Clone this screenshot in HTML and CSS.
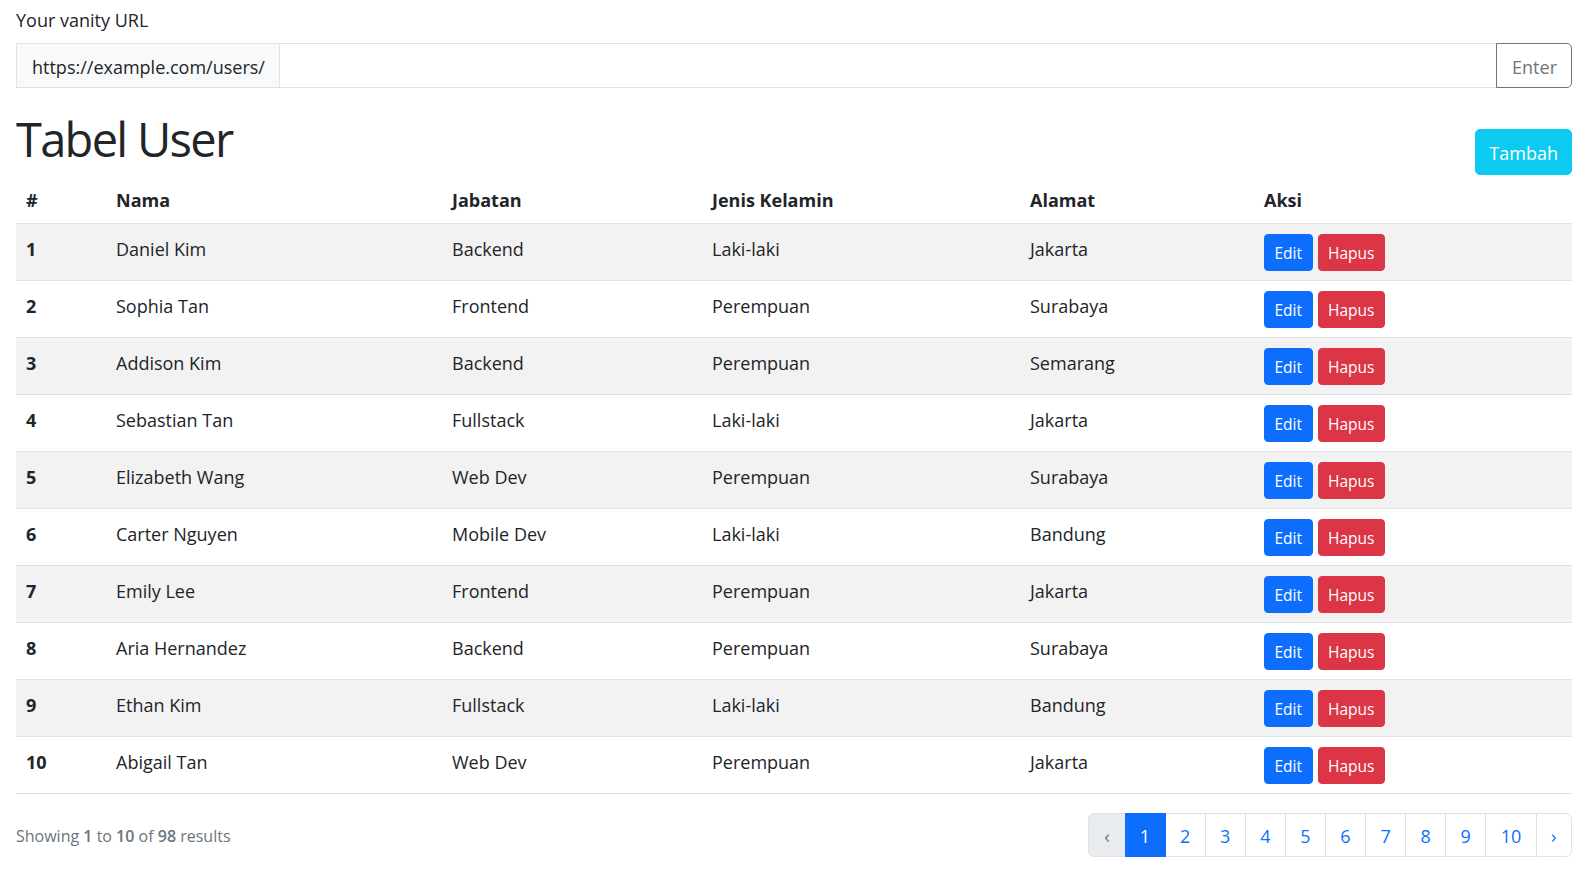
FILE: index.html
```html
<!DOCTYPE html>
<html lang="id">
<head>
<meta charset="utf-8">
<title>Tabel User</title>
<link rel="stylesheet" href="styles.css">
</head>
<body>
<div class="page">
  <label class="field-label" for="vanity">Your vanity URL</label>
  <div class="input-group">
    <span class="input-prefix">https://example.com/users/</span>
    <input id="vanity" class="input-main" type="text">
    <button class="btn-outline" type="button">Enter</button>
  </div>

  <div class="title-row">
    <h1 class="title">Tabel User</h1>
    <button class="btn-info" type="button">Tambah</button>
  </div>

  <table class="table">
    <colgroup>
      <col class="c-no"><col class="c-nama"><col class="c-jab"><col class="c-jk"><col class="c-alamat"><col class="c-aksi">
    </colgroup>
    <thead>
      <tr><th>#</th><th>Nama</th><th>Jabatan</th><th>Jenis Kelamin</th><th>Alamat</th><th>Aksi</th></tr>
    </thead>
    <tbody>
      <tr><th>1</th><td>Daniel Kim</td><td>Backend</td><td>Laki-laki</td><td>Jakarta</td><td><div class="actions"><button class="btn-sm btn-primary">Edit</button><button class="btn-sm btn-danger">Hapus</button></div></td></tr>
      <tr><th>2</th><td>Sophia Tan</td><td>Frontend</td><td>Perempuan</td><td>Surabaya</td><td><div class="actions"><button class="btn-sm btn-primary">Edit</button><button class="btn-sm btn-danger">Hapus</button></div></td></tr>
      <tr><th>3</th><td>Addison Kim</td><td>Backend</td><td>Perempuan</td><td>Semarang</td><td><div class="actions"><button class="btn-sm btn-primary">Edit</button><button class="btn-sm btn-danger">Hapus</button></div></td></tr>
      <tr><th>4</th><td>Sebastian Tan</td><td>Fullstack</td><td>Laki-laki</td><td>Jakarta</td><td><div class="actions"><button class="btn-sm btn-primary">Edit</button><button class="btn-sm btn-danger">Hapus</button></div></td></tr>
      <tr><th>5</th><td>Elizabeth Wang</td><td>Web Dev</td><td>Perempuan</td><td>Surabaya</td><td><div class="actions"><button class="btn-sm btn-primary">Edit</button><button class="btn-sm btn-danger">Hapus</button></div></td></tr>
      <tr><th>6</th><td>Carter Nguyen</td><td>Mobile Dev</td><td>Laki-laki</td><td>Bandung</td><td><div class="actions"><button class="btn-sm btn-primary">Edit</button><button class="btn-sm btn-danger">Hapus</button></div></td></tr>
      <tr><th>7</th><td>Emily Lee</td><td>Frontend</td><td>Perempuan</td><td>Jakarta</td><td><div class="actions"><button class="btn-sm btn-primary">Edit</button><button class="btn-sm btn-danger">Hapus</button></div></td></tr>
      <tr><th>8</th><td>Aria Hernandez</td><td>Backend</td><td>Perempuan</td><td>Surabaya</td><td><div class="actions"><button class="btn-sm btn-primary">Edit</button><button class="btn-sm btn-danger">Hapus</button></div></td></tr>
      <tr><th>9</th><td>Ethan Kim</td><td>Fullstack</td><td>Laki-laki</td><td>Bandung</td><td><div class="actions"><button class="btn-sm btn-primary">Edit</button><button class="btn-sm btn-danger">Hapus</button></div></td></tr>
      <tr><th>10</th><td>Abigail Tan</td><td>Web Dev</td><td>Perempuan</td><td>Jakarta</td><td><div class="actions"><button class="btn-sm btn-primary">Edit</button><button class="btn-sm btn-danger">Hapus</button></div></td></tr>
    </tbody>
  </table>

  <div class="footer">
    <p class="summary">Showing <span class="strong">1</span> to <span class="strong">10</span> of <span class="strong">98</span> results</p>
    <ul class="pagination">
      <li class="page-item disabled"><span class="page-link">&lsaquo;</span></li>
      <li class="page-item active"><span class="page-link">1</span></li>
      <li class="page-item"><a class="page-link" href="#">2</a></li>
      <li class="page-item"><a class="page-link" href="#">3</a></li>
      <li class="page-item"><a class="page-link" href="#">4</a></li>
      <li class="page-item"><a class="page-link" href="#">5</a></li>
      <li class="page-item"><a class="page-link" href="#">6</a></li>
      <li class="page-item"><a class="page-link" href="#">7</a></li>
      <li class="page-item"><a class="page-link" href="#">8</a></li>
      <li class="page-item"><a class="page-link" href="#">9</a></li>
      <li class="page-item"><a class="page-link" href="#">10</a></li>
      <li class="page-item"><a class="page-link" href="#">&rsaquo;</a></li>
    </ul>
  </div>
</div>
</body>
</html>
```
FILE: styles.css
```css
* { box-sizing: border-box; }

html, body {
  margin: 0;
  background: #fff;
}

body {
  font-family: "Open Sans", "Noto Sans", sans-serif;
  font-size: 18px;
  line-height: 27px;
  color: #212529;
}

.page {
  padding: 7px 15px 0 16px;
}

.field-label {
  display: block;
  margin-bottom: 9px;
}

.input-group {
  display: flex;
  height: 45px;
}

.input-prefix {
  display: flex;
  align-items: center;
  padding: 3px 14px 0 15px;
  background: #f8f9fa;
  border: 1px solid #dee2e6;
  white-space: nowrap;
}

.input-main {
  flex: 1;
  min-width: 0;
  border: 1px solid #dee2e6;
  border-left: 0;
  border-right: 0;
  font: inherit;
  padding: 0 14px;
  outline: none;
}

.btn-outline {
  font: inherit;
  color: #6c757d;
  background: #fff;
  border: 1px solid #6c757d;
  border-radius: 0 5px 5px 0;
  padding: 3px 14px 0 15px;
  cursor: pointer;
}

.title-row {
  display: flex;
  justify-content: space-between;
  align-items: flex-start;
  margin-top: 23px;
}

.title {
  margin: 0;
  font-size: 47px;
  line-height: 56px;
  font-weight: 400;
  letter-spacing: -1.7px;
}

.btn-info {
  margin-top: 18px;
  height: 46px;
  padding: 2px 13px 0;
  font: inherit;
  color: #fff;
  background: #0dcaf0;
  border: 1px solid #0dcaf0;
  border-radius: 5px;
  cursor: pointer;
}

.table {
  width: 100%;
  margin-top: 3px;
  border-collapse: collapse;
  table-layout: fixed;
}

.c-no { width: 90px; }
.c-nama { width: 336px; }
.c-jab { width: 260px; }
.c-jk { width: 318px; }
.c-alamat { width: 234px; }
.c-aksi { width: 318px; }

.table th,
.table td {
  text-align: left;
  padding: 9.5px 10px;
  line-height: 31px;
  vertical-align: top;
  border-bottom: 1px solid #dee2e6;
}

.table thead th {
  padding: 9px 10px 9px;
  line-height: 27px;
  font-weight: 700;
}

.table tbody th {
  font-weight: 700;
}

.table tbody tr:nth-child(odd) {
  background: #f2f2f2;
}

.actions {
  display: flex;
  gap: 5px;
}

.btn-sm {
  height: 37px;
  padding: 2px 9.5px 0;
  font-family: inherit;
  font-size: 15.5px;
  line-height: 33px;
  color: #fff;
  border-radius: 4px;
  border: 1px solid transparent;
  cursor: pointer;
}

.btn-primary { background: #0d6efd; border-color: #0d6efd; }
.btn-danger { background: #dc3545; border-color: #dc3545; }

.footer {
  display: flex;
  justify-content: space-between;
  align-items: center;
  margin-top: 19px;
}

.summary {
  margin: 0;
  padding-top: 3px;
  font-size: 16px;
  color: #6c757d;
}

.strong { font-weight: 600; }

.pagination {
  display: flex;
  list-style: none;
  margin: 0;
  padding: 0;
}

.page-link {
  display: block;
  padding: 8.5px 14.5px 6.5px 14.3px;
  line-height: 27px;
  color: #0d6efd;
  text-decoration: none;
  background: #fff;
  border: 1px solid #dee2e6;
}

.page-item:not(:first-child) .page-link { margin-left: -1px; }

.page-item:first-child .page-link { border-radius: 6px 0 0 6px; padding-left: 15px; padding-right: 15px; }
.page-item:last-child .page-link { border-radius: 0 6px 6px 0; }

.page-item.disabled .page-link {
  color: #6c757d;
  background: #e9ecef;
}

.page-item.active .page-link {
  position: relative;
  color: #fff;
  background: #0d6efd;
  border-color: #0d6efd;
}
```
